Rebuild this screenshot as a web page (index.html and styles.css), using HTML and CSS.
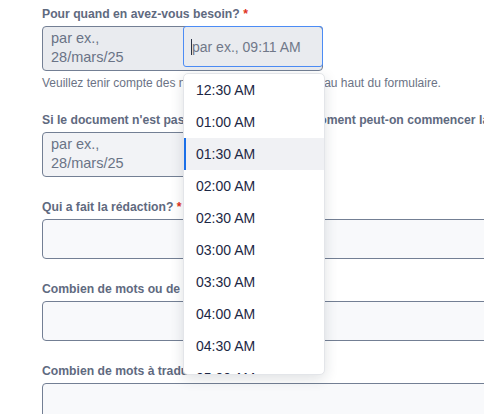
FILE: index.html
```html
<!DOCTYPE html>
<html lang="fr">
<head>
<meta charset="utf-8">
<link rel="stylesheet" href="styles.css">
</head>
<body>
<form class="form">
  <div class="group">
    <div class="label">Pour quand en avez-vous besoin? <span class="req">*</span></div>
    <div class="combo combo-focus">
      <div class="date">par ex.,<br>28/mars/25</div>
      <div class="time"><span class="caret"></span>par ex., 09:11 AM</div>
      <ul class="dropdown">
        <li class="opt">12:30 AM</li>
        <li class="opt">01:00 AM</li>
        <li class="opt active">01:30 AM</li>
        <li class="opt">02:00 AM</li>
        <li class="opt">02:30 AM</li>
        <li class="opt">03:00 AM</li>
        <li class="opt">03:30 AM</li>
        <li class="opt">04:00 AM</li>
        <li class="opt">04:30 AM</li>
        <li class="opt">05:00 AM</li>
      </ul>
    </div>
    <div class="help">Veuillez tenir compte des notes sur le fuseau horaire au haut du formulaire.</div>
  </div>

  <div class="group">
    <div class="label">Si le document n'est pas prêt, à partir de quel moment peut-on commencer la traduction?</div>
    <div class="combo combo-light">
      <div class="date">par ex.,<br>28/mars/25</div>
      <div class="time2"></div>
    </div>
  </div>

  <div class="group">
    <div class="label">Qui a fait la rédaction? <span class="req">*</span></div>
    <div class="input"></div>
  </div>

  <div class="group">
    <div class="label">Combien de mots ou de pages?</div>
    <div class="input"></div>
  </div>

  <div class="group">
    <div class="label">Combien de mots à traduire?</div>
    <div class="input"></div>
  </div>
</form>
</body>
</html>
```

FILE: styles.css
```css
html, body {
  margin: 0;
  padding: 0;
  background: #ffffff;
  overflow: hidden;
}

body {
  font-family: "Liberation Sans", Arial, sans-serif;
  width: 484px;
  height: 414px;
}

.form {
  padding: 6px 0 0 42px;
}

.group {
  margin-bottom: 22px;
}

.label {
  font-size: 12.2px;
  line-height: 16px;
  font-weight: bold;
  color: #5f6a7f;
  white-space: nowrap;
  margin-bottom: 4px;
}

.req {
  color: #e0321c;
}

.combo {
  position: relative;
  display: flex;
  width: 281px;
  height: 45px;
  box-sizing: border-box;
  border: 1px solid #737f94;
  border-radius: 4px;
}

.combo-focus {
  background: #e9ebef;
}

.combo-light {
  margin-top: 1px;
  background: #f2f3f6;
}

.date {
  width: 140px;
  box-sizing: border-box;
  padding: 2px 0 0 8px;
  font-size: 14.5px;
  line-height: 19px;
  color: #6a7386;
}

.time {
  flex: 1;
  align-self: flex-start;
  height: 41px;
  margin: -1px -1px 0 0;
  box-sizing: border-box;
  border: 1px solid #4c8cf5;
  border-radius: 3px;
  padding-left: 7px;
  display: flex;
  align-items: center;
  font-size: 14px;
  color: #707889;
}

.caret {
  display: inline-block;
  width: 1px;
  height: 16px;
  background: #2a3346;
}

.time2 {
  flex: 1;
}

.dropdown {
  position: absolute;
  left: 140px;
  top: 46px;
  width: 140px;
  height: 300px;
  margin: 0;
  padding: 0;
  list-style: none;
  background: #ffffff;
  border: 1px solid #e3e5e9;
  border-radius: 5px;
  box-shadow: 0 4px 14px rgba(30, 40, 60, 0.14);
  overflow: hidden;
  z-index: 10;
}

.opt {
  height: 32px;
  line-height: 32px;
  padding-left: 10px;
  font-size: 14px;
  color: #1c2744;
  border-left: 3px solid transparent;
  margin-left: -1px;
}

.opt.active {
  background: #f0f1f4;
  border-left-color: #1a6fe8;
}

.help {
  margin-top: 5px;
  font-size: 12px;
  line-height: 14px;
  color: #6b7385;
  white-space: nowrap;
}

.input {
  width: 520px;
  height: 40px;
  box-sizing: border-box;
  border: 1px solid #737f94;
  border-radius: 4px;
  background: #f8f9fb;
}
```
